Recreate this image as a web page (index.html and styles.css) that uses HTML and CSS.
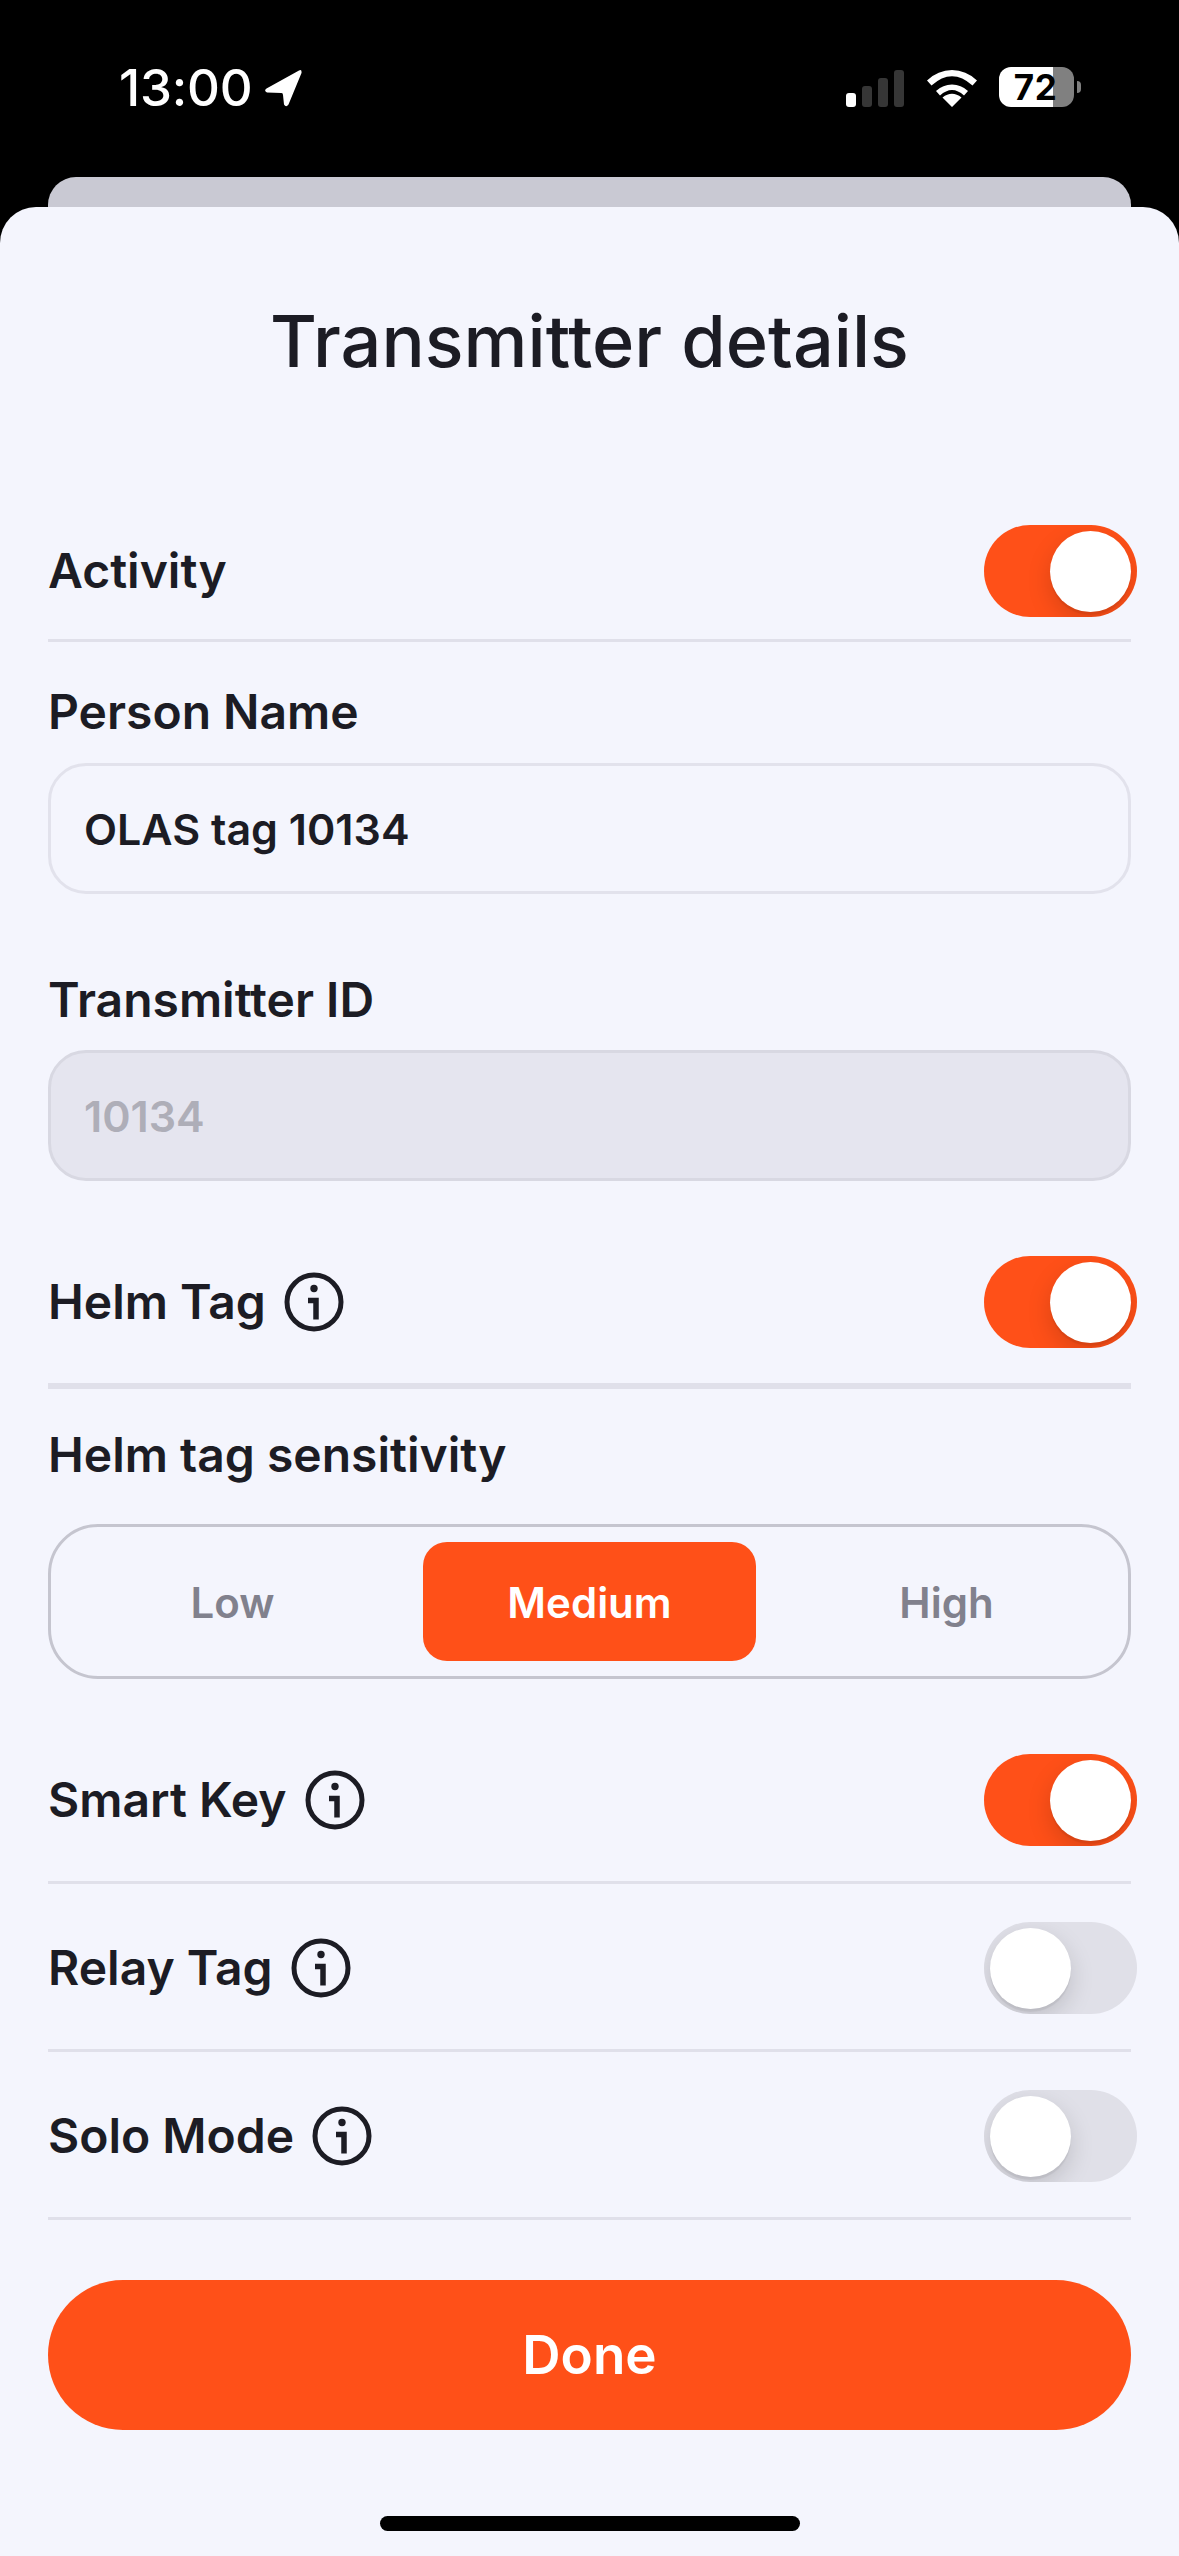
FILE: index.html
```html
<!DOCTYPE html>
<html lang="en">
<head>
<meta charset="utf-8">
<title>Transmitter details</title>
<link rel="stylesheet" href="styles.css">
</head>
<body>
<div class="screen">
  <header class="status">
    <div class="status-left">
      <span class="time">13:00</span>
      <svg class="arrow" viewBox="0 0 38 38"><path d="M35 1.500 L2.500 19.500 Q-0.500 22 3 23.500 L17.500 24 Q19 24 19 26 L20 35.500 Q22 39 24.500 35.500 L37.500 4 Q38 0 35 1.500Z" fill="#fff"/></svg>
    </div>
    <div class="status-right">
      <div class="signal">
        <i class="bar bar-1"></i><i class="bar bar-2"></i><i class="bar bar-3"></i><i class="bar bar-4"></i>
      </div>
      <svg class="wifi" viewBox="0 0 50 37"><path d="M25 37 L15.500 27.500 Q25 20 34.500 27.500Z M25 14.500 Q34 14.500 41 21 L37 25.500 Q25 14.500 13 25.500 L9 21 Q16 14.500 25 14.500Z M25 0 Q39 0 50 10.500 L45.500 15.500 Q25 -3 4.500 15.500 L0 10.500 Q11 0 25 0Z" fill="#fff"/></svg>
      <div class="battery"><span class="battery-level">72</span></div>
      <i class="battery-nub"></i>
    </div>
  </header>
  <div class="back-card"></div>
  <main class="sheet">
    <h1 class="title">Transmitter details</h1>

    <div class="row row-first">
      <div class="row-label">Activity</div>
      <div class="toggle on"><i class="thumb"></i></div>
    </div>

    <label class="label label-first">Person Name</label>
    <div class="input">OLAS tag 10134</div>

    <label class="label label-next">Transmitter ID</label>
    <div class="input disabled">10134</div>

    <div class="row row-thick row-after-field">
      <div class="row-label">Helm Tag
        <svg class="info" viewBox="0 0 60 60"><circle cx="30" cy="30" r="27" fill="none" stroke="#1c1c24" stroke-width="5"/><circle cx="30" cy="16.500" r="3.700" fill="#1c1c24"/><path d="M24 28.500 H32 V47.500" fill="none" stroke="#1c1c24" stroke-width="5.500"/></svg>
      </div>
      <div class="toggle on"><i class="thumb"></i></div>
    </div>

    <label class="label label-seg">Helm tag sensitivity</label>
    <div class="segments">
      <div class="segment">Low</div>
      <div class="segment active">Medium</div>
      <div class="segment">High</div>
    </div>

    <div class="row row-after-field">
      <div class="row-label">Smart Key
        <svg class="info" viewBox="0 0 60 60"><circle cx="30" cy="30" r="27" fill="none" stroke="#1c1c24" stroke-width="5"/><circle cx="30" cy="16.500" r="3.700" fill="#1c1c24"/><path d="M24 28.500 H32 V47.500" fill="none" stroke="#1c1c24" stroke-width="5.500"/></svg>
      </div>
      <div class="toggle on"><i class="thumb"></i></div>
    </div>

    <div class="row">
      <div class="row-label">Relay Tag
        <svg class="info" viewBox="0 0 60 60"><circle cx="30" cy="30" r="27" fill="none" stroke="#1c1c24" stroke-width="5"/><circle cx="30" cy="16.500" r="3.700" fill="#1c1c24"/><path d="M24 28.500 H32 V47.500" fill="none" stroke="#1c1c24" stroke-width="5.500"/></svg>
      </div>
      <div class="toggle"><i class="thumb"></i></div>
    </div>

    <div class="row">
      <div class="row-label">Solo Mode
        <svg class="info" viewBox="0 0 60 60"><circle cx="30" cy="30" r="27" fill="none" stroke="#1c1c24" stroke-width="5"/><circle cx="30" cy="16.500" r="3.700" fill="#1c1c24"/><path d="M24 28.500 H32 V47.500" fill="none" stroke="#1c1c24" stroke-width="5.500"/></svg>
      </div>
      <div class="toggle"><i class="thumb"></i></div>
    </div>

    <button class="done">Done</button>
    <div class="home-bar"></div>
  </main>
</div>
</body>
</html>
```

FILE: styles.css
```css
* { box-sizing: border-box; }
html, body { margin: 0; padding: 0; background: #000; }
.screen {
  width: 1179px;
  height: 2556px;
  overflow: hidden;
  display: flex;
  flex-direction: column;
  font-family: Inter, "Liberation Sans", sans-serif;
  color: #1c1c24;
}
.status {
  height: 177px;
  padding: 69px 98px 0 119px;
  display: flex;
  justify-content: space-between;
  align-items: flex-start;
  color: #fff;
}
.status-left { display: flex; align-items: center; height: 38px; gap: 12px; }
.time { font-size: 51px; line-height: 38px; font-weight: 500; letter-spacing: -0.2px; }
.arrow { width: 38px; height: 38px; display: block; }
.status-right { display: flex; align-items: flex-end; height: 38px; }
.signal { display: flex; align-items: flex-end; gap: 6px; height: 37px; margin-right: 23px; }
.bar { display: block; width: 10px; border-radius: 3px; background: #363636; }
.bar-1 { height: 14px; background: #fff; }
.bar-2 { height: 21px; }
.bar-3 { height: 29px; }
.bar-4 { height: 37px; }
.wifi { width: 50px; height: 37px; display: block; margin-right: 22px; }
.battery {
  width: 75px;
  height: 40px;
  border-radius: 12px;
  background: linear-gradient(90deg, #fff 0 54px, #808080 54px);
  display: flex;
  align-items: center;
  justify-content: center;
  padding-right: 2px;
}
.battery-level { font-size: 35px; line-height: 40px; font-weight: 700; color: #000; letter-spacing: 0.5px; }
.battery-nub {
  display: block;
  width: 4px;
  height: 12px;
  margin: 0 0 14px 3px;
  border-radius: 0 6px 6px 0;
  background: #808080;
}
.back-card {
  height: 30px;
  margin: 0 48px;
  background: #c9c9d3;
  border-radius: 28px 28px 0 0;
}
.sheet {
  flex: 1;
  background: #f4f5fd;
  border-radius: 36px 36px 0 0;
  padding: 0 48px;
  display: flex;
  flex-direction: column;
}
.title {
  margin: 0;
  padding-top: 90px;
  height: 280px;
  font-family: Inter, "Liberation Sans", sans-serif;
  font-size: 72px;
  line-height: 88px;
  font-weight: 500;
  text-align: center;
}
.row {
  display: flex;
  align-items: center;
  justify-content: space-between;
  padding: 38px 0 35px;
  border-bottom: 3px solid #e0e0ea;
}
.row-first { padding-bottom: 22px; }
.row-thick { border-bottom-width: 6px; }
.row-label {
  display: flex;
  align-items: center;
  gap: 18px;
  font-size: 48px;
  line-height: 58px;
  font-weight: 600;
}
.info { width: 60px; height: 60px; display: block; flex: none; }
.toggle {
  width: 153px;
  height: 92px;
  margin-right: -6px;
  padding: 6px;
  border-radius: 46px;
  background: #e0e0e8;
  overflow: hidden;
  display: flex;
  justify-content: flex-start;
}
.toggle.on { background: #ff5018; justify-content: flex-end; }
.thumb {
  display: block;
  width: 81px;
  height: 81px;
  border-radius: 50%;
  background: #fff;
  box-shadow: 0 9px 24px rgba(0, 0, 0, 0.15), 0 3px 1px rgba(0, 0, 0, 0.06);
}
.label {
  display: block;
  font-size: 48px;
  line-height: 58px;
  font-weight: 600;
  margin-bottom: 22px;
}
.label-first { margin-top: 41px; }
.label-next { margin-top: 77px; margin-bottom: 21px; }
.label-seg { margin-top: 37px; margin-bottom: 40px; }
.input {
  height: 131px;
  padding: 0 33px;
  display: flex;
  align-items: center;
  border: 3px solid #e2e2ec;
  border-radius: 38px;
  font-size: 43px;
  font-weight: 600;
}
.input.disabled {
  background: #e5e5ef;
  border-color: #d8d8e2;
  color: #aeaeb8;
}
.row-after-field { margin-top: 37px; }
.segments {
  height: 155px;
  padding: 15px;
  border: 3px solid #c5c5cf;
  border-radius: 50px;
  display: grid;
  grid-template-columns: repeat(3, 1fr);
  gap: 24px;
}
.segment {
  display: flex;
  align-items: center;
  justify-content: center;
  padding-top: 2px;
  font-size: 42px;
  font-weight: 600;
  color: #81818d;
  border-radius: 24px;
}
.segment.active { background: #ff5018; color: #fff; }
.done {
  display: block;
  width: 100%;
  height: 150px;
  margin-top: 60px;
  padding: 0;
  border: 0;
  border-radius: 75px;
  background: #ff5018;
  color: #fff;
  font-family: inherit;
  font-size: 53px;
  font-weight: 600;
}
.home-bar {
  width: 420px;
  height: 15px;
  margin: 86px auto 0;
  border-radius: 8px;
  background: #000;
}
```
